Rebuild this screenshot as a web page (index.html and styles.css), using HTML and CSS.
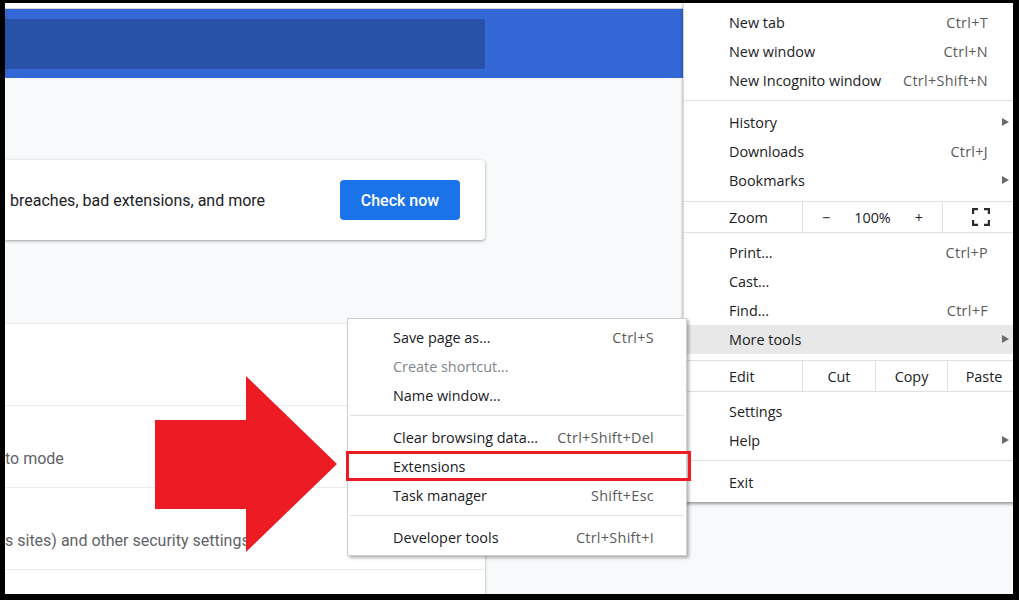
FILE: index.html
```html
<!DOCTYPE html>
<html lang="en">
<head>
    <meta charset="UTF-8">
    <meta name="viewport" content="width=device-width, initial-scale=1.0">
    <title>Settings</title>
    <link rel="stylesheet" href="styles.css">
</head>
<body>
    <div class="frame">
        <div class="toolbar-edge"></div>
        <header class="settings-header">
            <div class="search-box"></div>
        </header>
        <main class="settings-main">
            <section class="card safety-card">
                <p class="safety-text">breaches, bad extensions, and more</p>
                <button class="primary-button">Check now</button>
            </section>
            <section class="card privacy-card">
                <div class="privacy-row"></div>
                <div class="privacy-row"><span class="row-sub">to mode</span></div>
                <div class="privacy-row"><span class="row-sub">s sites) and other security settings</span></div>
                <div class="privacy-row"></div>
            </section>
        </main>

        <div class="menu app-menu">
            <div class="menu-item"><span>New tab</span><span class="shortcut">Ctrl+T</span></div>
            <div class="menu-item"><span>New window</span><span class="shortcut">Ctrl+N</span></div>
            <div class="menu-item"><span>New Incognito window</span><span class="shortcut">Ctrl+Shift+N</span></div>
            <div class="menu-sep"></div>
            <div class="menu-item has-sub"><span>History</span></div>
            <div class="menu-item"><span>Downloads</span><span class="shortcut">Ctrl+J</span></div>
            <div class="menu-item has-sub"><span>Bookmarks</span></div>
            <div class="menu-split zoom-row">
                <div class="split-label">Zoom</div>
                <div class="split-cell zoom-controls">
                    <span>&minus;</span>
                    <span>100%</span>
                    <span>+</span>
                </div>
                <div class="split-cell">
                    <svg class="fullscreen-icon" width="18" height="18" viewBox="0 0 18 18">
                        <path d="M1 6V1h5M12 1h5v5M17 12v5h-5M6 17H1v-5" fill="none" stroke="#2b2b2b" stroke-width="2.4"/>
                    </svg>
                </div>
            </div>
            <div class="menu-item"><span>Print...</span><span class="shortcut">Ctrl+P</span></div>
            <div class="menu-item"><span>Cast...</span></div>
            <div class="menu-item"><span>Find...</span><span class="shortcut">Ctrl+F</span></div>
            <div class="menu-item has-sub active"><span>More tools</span></div>
            <div class="menu-split edit-row">
                <div class="split-label">Edit</div>
                <div class="split-cell">Cut</div>
                <div class="split-cell">Copy</div>
                <div class="split-cell">Paste</div>
            </div>
            <div class="menu-item"><span>Settings</span></div>
            <div class="menu-item has-sub"><span>Help</span></div>
            <div class="menu-sep"></div>
            <div class="menu-item"><span>Exit</span></div>
        </div>

        <div class="menu sub-menu">
            <div class="menu-item"><span>Save page as...</span><span class="shortcut">Ctrl+S</span></div>
            <div class="menu-item disabled"><span>Create shortcut...</span></div>
            <div class="menu-item"><span>Name window...</span></div>
            <div class="menu-sep"></div>
            <div class="menu-item"><span>Clear browsing data...</span><span class="shortcut">Ctrl+Shift+Del</span></div>
            <div class="menu-item"><span>Extensions</span></div>
            <div class="menu-item"><span>Task manager</span><span class="shortcut">Shift+Esc</span></div>
            <div class="menu-sep"></div>
            <div class="menu-item"><span>Developer tools</span><span class="shortcut">Ctrl+Shift+I</span></div>
        </div>

        <svg class="callout-arrow" width="183" height="177" viewBox="0 0 183 177">
            <polygon points="0,44 91,44 91,0 182,88 91,176 91,133 0,133" fill="#ed1c24"/>
        </svg>
        <div class="callout-box"></div>
    </div>
</body>
</html>
```

FILE: styles.css
```css
* {
    box-sizing: border-box;
}
html, body {
    margin: 0;
    padding: 0;
}
body {
    background: #000;
}
.frame {
    position: relative;
    width: 1019px;
    height: 600px;
    overflow: hidden;
    border-style: solid;
    border-color: #000;
    border-width: 3px 6px 6px 5px;
    background: #f8f9fa;
    font-family: Roboto, Arial, sans-serif;
    color: #202124;
}
.toolbar-edge {
    height: 6px;
    background: #fff;
    border-bottom: 1px solid #d3d5d8;
}
.settings-header {
    height: 69px;
    padding-top: 10px;
    background: #3367d6;
}
.search-box {
    width: 480px;
    height: 50px;
    background: #2851a8;
    border-radius: 0 3px 3px 0;
}
.settings-main {
    width: 480px;
}
.card {
    background: #fff;
    box-shadow: 0 1px 2px rgba(60, 64, 67, 0.3), 0 1px 3px 1px rgba(60, 64, 67, 0.15);
}
.safety-card {
    margin-top: 82px;
    height: 80px;
    display: flex;
    align-items: center;
    justify-content: space-between;
    padding: 0 25px 0 5px;
    border-radius: 0 4px 4px 0;
}
.safety-text {
    margin: 0;
    font-size: 16px;
    color: #202124;
}
.primary-button {
    width: 120px;
    height: 40px;
    border: none;
    border-radius: 4px;
    background: #1a73e8;
    color: #fff;
    font-family: Roboto, Arial, sans-serif;
    font-size: 16px;
    font-weight: 500;
}
.privacy-card {
    margin-top: 84px;
    border-radius: 0 4px 0 0;
}
.privacy-row {
    height: 82px;
    display: flex;
    align-items: flex-end;
    padding-bottom: 18px;
    border-bottom: 1px solid #e8eaed;
}
.row-sub {
    font-size: 16px;
    line-height: 20px;
    color: #5f6368;
}

/* browser menus */
.menu {
    position: absolute;
    background: #fff;
    font-family: "Open Sans", "Noto Sans", sans-serif;
    font-size: 14.4px;
    color: #202124;
}
.app-menu {
    left: 678px;
    top: 0;
    width: 337px;
    padding: 5px 0 5px;
    border-left: 1px solid #d6d6d6;
    box-shadow: 0 2px 3px rgba(0, 0, 0, 0.4);
}
.sub-menu {
    left: 342px;
    top: 315px;
    width: 340px;
    padding: 4px 0 3px;
    border: 1px solid #cfcfcf;
    box-shadow: 2px 2px 3px rgba(0, 0, 0, 0.3);
    z-index: 2;
}
.menu-item {
    position: relative;
    height: 29px;
    display: flex;
    align-items: center;
    justify-content: space-between;
    padding: 0 32px 0 45px;
    white-space: nowrap;
}
.menu-item.active {
    background: #e8e8e8;
}
.menu-item.disabled {
    color: #80868b;
}
.shortcut {
    color: #5a5a5a;
    letter-spacing: 0.3px;
}
.has-sub::after {
    content: "";
    position: absolute;
    right: 11px;
    top: 10px;
    border-left: 7px solid #6b6b6b;
    border-top: 4.5px solid transparent;
    border-bottom: 4.5px solid transparent;
}
.menu-sep {
    height: 1px;
    margin: 5px 0 7px;
    background: #e0e0e0;
}
.sub-menu .menu-sep {
    margin-left: 2px;
    margin-right: 2px;
}
.menu-split {
    display: grid;
    height: 32px;
    margin: 6px 0 5px;
    border-top: 1px solid #e0e0e0;
    border-bottom: 1px solid #e0e0e0;
}
.zoom-row {
    grid-template-columns: 118px 140px 1fr;
}
.edit-row {
    grid-template-columns: 118px 73px 72px 1fr;
}
.split-label {
    display: flex;
    align-items: center;
    padding-left: 45px;
}
.split-cell {
    display: flex;
    align-items: center;
    justify-content: center;
    border-left: 1px solid #e0e0e0;
}
.zoom-controls span {
    flex: 1;
    text-align: center;
}
.fullscreen-icon {
    display: block;
    margin-right: 1px;
}

/* annotation */
.callout-arrow {
    position: absolute;
    left: 150px;
    top: 373px;
    z-index: 3;
}
.callout-box {
    position: absolute;
    left: 341px;
    top: 448px;
    width: 345px;
    height: 30px;
    border: 3px solid #ed1c24;
    z-index: 3;
}
```
